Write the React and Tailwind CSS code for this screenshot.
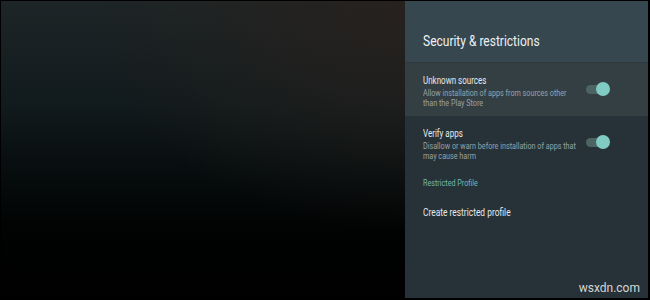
import React from 'react';

// Roboto squeezed to the narrow face used on the TV settings panel
function Narrow({ className = '', children }) {
    return (
        <div className={`origin-left scale-x-[0.8] whitespace-nowrap ${className}`}>{children}</div>
    );
}

function Toggle() {
    return (
        <div className="relative w-[24px] h-[14px] shrink-0">
            <div className="absolute left-0 top-[3px] w-[22px] h-[9px] rounded-full bg-[#4d6562]" />
            <div className="absolute right-0 top-0 w-[14px] h-[14px] rounded-full bg-[#80cbc4]" />
        </div>
    );
}

function SwitchRow({ title, lines, active }) {
    return (
        <div className={`flex items-start justify-between pl-[18px] pr-[38px] h-[53px] pt-[12px] ${active ? 'bg-[#343f44]' : ''}`}>
            <div className="w-[160px]">
                <Narrow className="text-[10px] leading-[12px] text-[#e6e9ea]">{title}</Narrow>
                <div className="mt-[1px] text-[9px] leading-[10px] text-[#98a3a7]">
                    {lines.map((l) => (
                        <Narrow key={l}>{l}</Narrow>
                    ))}
                </div>
            </div>
            <div className="mt-[7px]">
                <Toggle />
            </div>
        </div>
    );
}

export default function App() {
    return (
        <div className="w-[650px] h-[300px] bg-black pt-px pl-px pr-[2px] pb-[2px] flex font-['Roboto',sans-serif]">
            <div className="w-[404px] h-full bg-[radial-gradient(ellipse_at_top_right,rgba(40,33,29,0.9),transparent_55%),linear-gradient(to_bottom,#1d2527_0%,#111a1c_35%,#060b0c_60%,#010202_78%,#000_100%)]" />
            <div className="w-[243px] h-full bg-[#263238] flex flex-col">
                <div className="h-[61px] bg-[#37474f] flex items-end pl-[18px] pb-[12px]">
                    <Narrow className="text-[15px] leading-[18px] text-[#eef1f2]">Security &amp; restrictions</Narrow>
                </div>
                <div className="h-px bg-[#2d393f]" />
                <SwitchRow
                    title="Unknown sources"
                    lines={['Allow installation of apps from sources other', 'than the Play Store']}
                    active
                />
                <SwitchRow
                    title="Verify apps"
                    lines={['Disallow or warn before installation of apps that', 'may cause harm']}
                />
                <div className="pl-[18px] pt-[8px]">
                    <Narrow className="text-[9px] leading-[12px] text-[#74b8b0]">Restricted Profile</Narrow>
                </div>
                <div className="pl-[18px] pt-[17px]">
                    <Narrow className="text-[10.5px] leading-[14px] text-[#e6e9ea]">Create restricted profile</Narrow>
                </div>
                <div className="mt-auto self-end pr-[8px] pb-[2px] text-[12px] leading-[16px] text-[#d4d6d7]">wsxdn.com</div>
            </div>
        </div>
    );
}
